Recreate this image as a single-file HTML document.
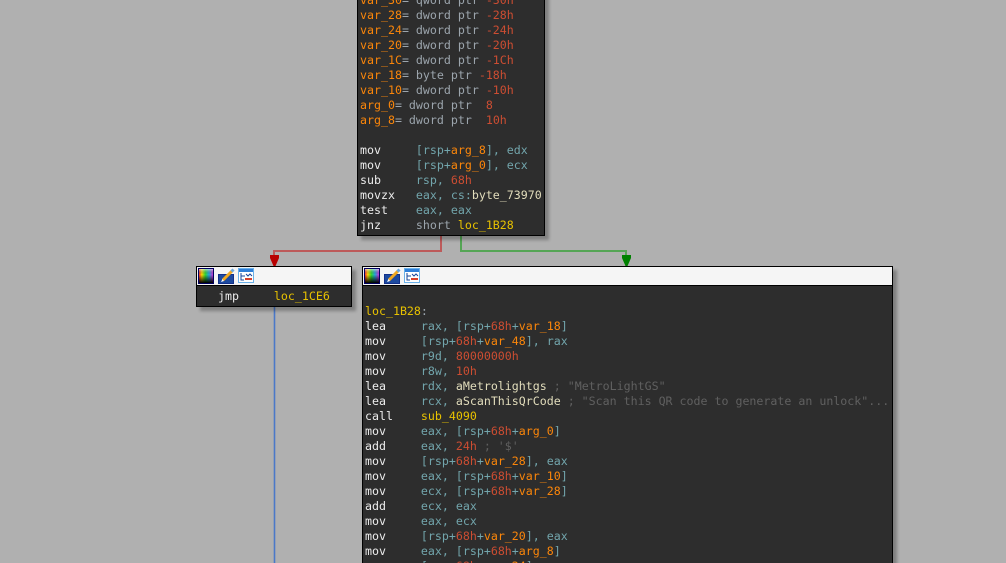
<!DOCTYPE html>
<html><head><meta charset="utf-8"><style>
html,body{margin:0;padding:0;width:1006px;height:563px;overflow:hidden}
body{background:#b0b0b0;position:relative;font-family:"DejaVu Sans Mono","Liberation Mono",monospace;font-size:11.62px}
.b{position:absolute;background:#2d2d2d;border:1px solid #000;box-shadow:4px 4px 3px rgba(0,0,0,.28);box-sizing:border-box;overflow:hidden}
.h{position:absolute;left:0;right:0;top:0;height:18px;background:#f5f5f5;border-bottom:1px solid #000}
.l{position:absolute;white-space:pre;line-height:15px;height:15px;margin-top:-1px;color:#ececec}
.r{color:#72a5ac}.v{color:#fb860a}.n{color:#cc4d32}.y{color:#e8c200}.c{color:#606060}.p{color:#e2ddbc}.t{color:#9ca5ad}
svg.i{position:absolute;top:0}
</style></head><body>

<svg width="1006" height="563" style="position:absolute;left:0;top:0">
<path d="M441 236V251H274V258" fill="none" stroke="#bd5a5a" stroke-width="2"/>
<path d="M270 255H279V258L275.500 266H273.500L270 258Z" fill="#b80000"/>
<path d="M461 236V251H626V258" fill="none" stroke="#55a555" stroke-width="2"/>
<path d="M622 255H631V258L627.500 266H625.500L622 258Z" fill="#008000"/>
<path d="M274.500 306V563" stroke="#4a78c8" stroke-width="1.6" fill="none"/>
</svg>

<div class="b" style="left:357px;top:-10px;width:188px;height:246px">
<div class="l" style="left:2px;top:3px"><span class="v">var_30</span><span class="t">= qword ptr </span><span class="n">-30h</span></div>
<div class="l" style="left:2px;top:18px"><span class="v">var_28</span><span class="t">= dword ptr </span><span class="n">-28h</span></div>
<div class="l" style="left:2px;top:33px"><span class="v">var_24</span><span class="t">= dword ptr </span><span class="n">-24h</span></div>
<div class="l" style="left:2px;top:48px"><span class="v">var_20</span><span class="t">= dword ptr </span><span class="n">-20h</span></div>
<div class="l" style="left:2px;top:63px"><span class="v">var_1C</span><span class="t">= dword ptr </span><span class="n">-1Ch</span></div>
<div class="l" style="left:2px;top:78px"><span class="v">var_18</span><span class="t">= byte ptr </span><span class="n">-18h</span></div>
<div class="l" style="left:2px;top:93px"><span class="v">var_10</span><span class="t">= dword ptr </span><span class="n">-10h</span></div>
<div class="l" style="left:2px;top:108px"><span class="v">arg_0</span><span class="t">= dword ptr  </span><span class="n">8</span></div>
<div class="l" style="left:2px;top:123px"><span class="v">arg_8</span><span class="t">= dword ptr  </span><span class="n">10h</span></div>
<div class="l" style="left:2px;top:153px">mov     <span class="r">[rsp+</span><span class="v">arg_8</span><span class="r">], edx</span></div>
<div class="l" style="left:2px;top:168px">mov     <span class="r">[rsp+</span><span class="v">arg_0</span><span class="r">], ecx</span></div>
<div class="l" style="left:2px;top:183px">sub     <span class="r">rsp, </span><span class="n">68h</span></div>
<div class="l" style="left:2px;top:198px">movzx   <span class="r">eax, cs:</span><span class="p">byte_73970</span></div>
<div class="l" style="left:2px;top:213px">test    <span class="r">eax, eax</span></div>
<div class="l" style="left:2px;top:228px">jnz     <span class="t">short </span><span class="y">loc_1B28</span></div>
</div>

<div class="b" style="left:196px;top:266px;width:156px;height:41px">
<div class="h"></div>
<svg class="i" style="left:0" width="66" height="18" viewBox="0 0 66 18">
<defs>
<linearGradient id="g1" x1="0" x2="1" y1="0" y2="0"><stop offset="0" stop-color="#f33"/><stop offset=".2" stop-color="#fd0"/><stop offset=".45" stop-color="#3d3"/><stop offset=".7" stop-color="#2ad"/><stop offset="1" stop-color="#c3d"/></linearGradient>
<linearGradient id="g2" x1="0" x2="0" y1="0" y2="1"><stop offset="0" stop-color="#fff" stop-opacity=".6"/><stop offset=".4" stop-color="#000" stop-opacity="0"/><stop offset="1" stop-color="#000"/></linearGradient>
</defs>
<rect x="1.5" y="1.5" width="15" height="15" fill="#000" stroke="#000060"/>
<rect x="2" y="2" width="14" height="14" fill="url(#g1)"/><rect x="2" y="2" width="14" height="14" fill="url(#g2)"/>
<rect x="21.5" y="7.5" width="15" height="9" fill="#1d4a9f" stroke="#12308a"/>
<path d="M26 13L35 4" stroke="#f0a820" stroke-width="3"/><path d="M34.500 4.500L36.500 2.500" stroke="#6aa8e0" stroke-width="3"/><path d="M24 15L25.500 12L27 14Z" fill="#fff"/>
<rect x="41.500" y="1.500" width="15" height="14" fill="#fff" stroke="#6ab0e8"/>
<rect x="42" y="2" width="14" height="3" fill="#2f7fd8"/>
<path d="M44 6V13H47M44 9H48M49 7L51 9L53 7L55 9" stroke="#16459a" fill="none"/>
<rect x="48" y="11" width="7" height="2" fill="#d8402a"/>
</svg>
<div class="l" style="left:21px;top:23px">jmp     <span class="y">loc_1CE6</span></div>
</div>

<div class="b" style="left:362px;top:266px;width:531px;height:310px">
<div class="h"></div>
<svg class="i" style="left:0" width="66" height="18" viewBox="0 0 66 18">
<rect x="1.5" y="1.5" width="15" height="15" fill="#000" stroke="#000060"/>
<rect x="2" y="2" width="14" height="14" fill="url(#g1)"/><rect x="2" y="2" width="14" height="14" fill="url(#g2)"/>
<rect x="21.5" y="7.5" width="15" height="9" fill="#1d4a9f" stroke="#12308a"/>
<path d="M26 13L35 4" stroke="#f0a820" stroke-width="3"/><path d="M34.500 4.500L36.500 2.500" stroke="#6aa8e0" stroke-width="3"/><path d="M24 15L25.500 12L27 14Z" fill="#fff"/>
<rect x="41.500" y="1.500" width="15" height="14" fill="#fff" stroke="#6ab0e8"/>
<rect x="42" y="2" width="14" height="3" fill="#2f7fd8"/>
<path d="M44 6V13H47M44 9H48M49 7L51 9L53 7L55 9" stroke="#16459a" fill="none"/>
<rect x="48" y="11" width="7" height="2" fill="#d8402a"/>
</svg>
<div class="l" style="left:2px;top:38px"><span class="y">loc_1B28</span><span class="t">:</span></div>
<div class="l" style="left:2px;top:53px">lea     <span class="r">rax, [rsp+</span><span class="n">68h</span><span class="r">+</span><span class="v">var_18</span><span class="r">]</span></div>
<div class="l" style="left:2px;top:68px">mov     <span class="r">[rsp+</span><span class="n">68h</span><span class="r">+</span><span class="v">var_48</span><span class="r">], rax</span></div>
<div class="l" style="left:2px;top:83px">mov     <span class="r">r9d, </span><span class="n">80000000h</span></div>
<div class="l" style="left:2px;top:98px">mov     <span class="r">r8w, </span><span class="n">10h</span></div>
<div class="l" style="left:2px;top:113px">lea     <span class="r">rdx, </span><span class="p">aMetrolightgs</span><span class="c"> ; "MetroLightGS"</span></div>
<div class="l" style="left:2px;top:128px">lea     <span class="r">rcx, </span><span class="p">aScanThisQrCode</span><span class="c"> ; "Scan this QR code to generate an unlock"...</span></div>
<div class="l" style="left:2px;top:143px">call    <span class="y">sub_4090</span></div>
<div class="l" style="left:2px;top:158px">mov     <span class="r">eax, [rsp+</span><span class="n">68h</span><span class="r">+</span><span class="v">arg_0</span><span class="r">]</span></div>
<div class="l" style="left:2px;top:173px">add     <span class="r">eax, </span><span class="n">24h</span><span class="c"> ; '$'</span></div>
<div class="l" style="left:2px;top:188px">mov     <span class="r">[rsp+</span><span class="n">68h</span><span class="r">+</span><span class="v">var_28</span><span class="r">], eax</span></div>
<div class="l" style="left:2px;top:203px">mov     <span class="r">eax, [rsp+</span><span class="n">68h</span><span class="r">+</span><span class="v">var_10</span><span class="r">]</span></div>
<div class="l" style="left:2px;top:218px">mov     <span class="r">ecx, [rsp+</span><span class="n">68h</span><span class="r">+</span><span class="v">var_28</span><span class="r">]</span></div>
<div class="l" style="left:2px;top:233px">add     <span class="r">ecx, eax</span></div>
<div class="l" style="left:2px;top:248px">mov     <span class="r">eax, ecx</span></div>
<div class="l" style="left:2px;top:263px">mov     <span class="r">[rsp+</span><span class="n">68h</span><span class="r">+</span><span class="v">var_20</span><span class="r">], eax</span></div>
<div class="l" style="left:2px;top:278px">mov     <span class="r">eax, [rsp+</span><span class="n">68h</span><span class="r">+</span><span class="v">arg_8</span><span class="r">]</span></div>
<div class="l" style="left:2px;top:293px">mov     <span class="r">[rsp+</span><span class="n">68h</span><span class="r">+</span><span class="v">var_24</span><span class="r">], eax</span></div>
</div>
</body></html>
